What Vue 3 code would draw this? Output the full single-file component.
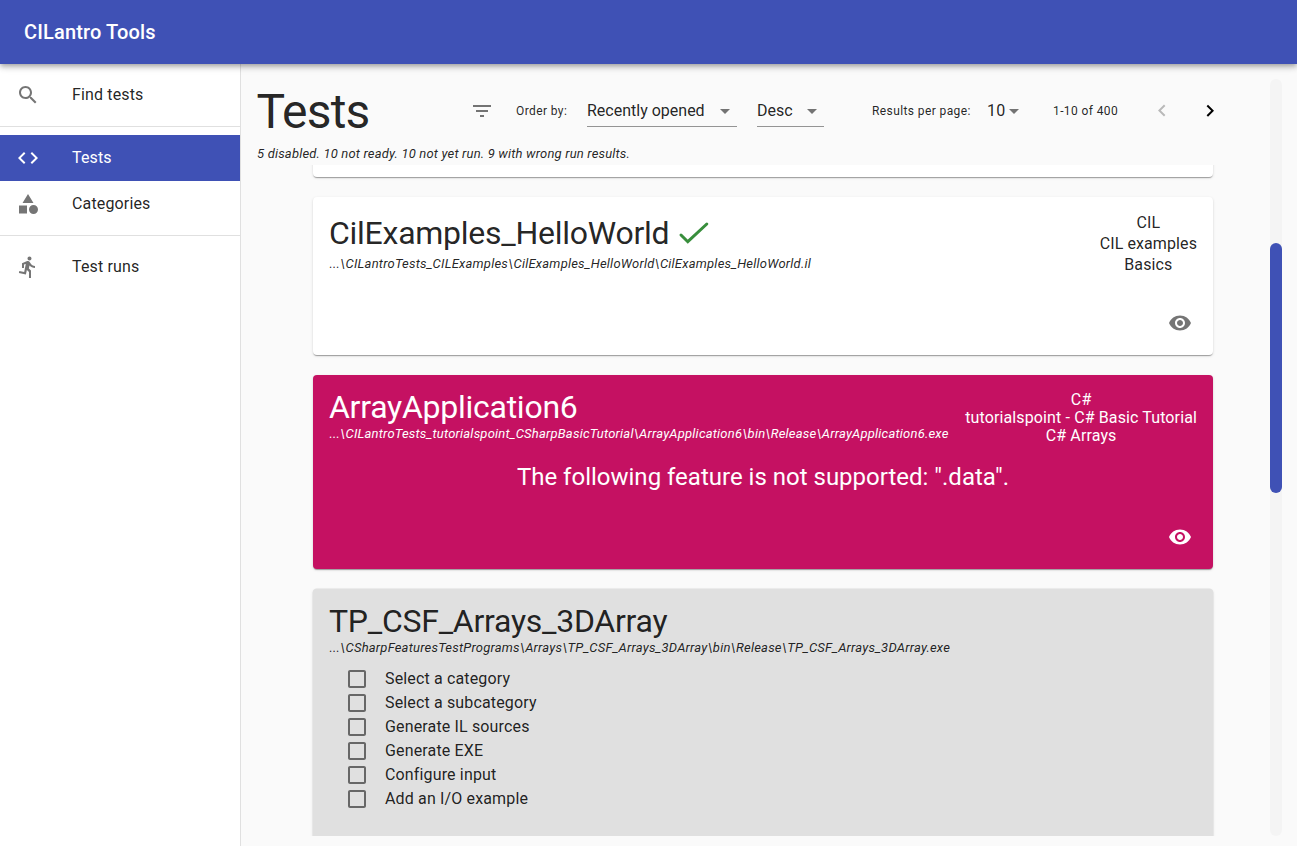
<script setup>
const nav = [
  [{ label: 'Find tests', icon: 'search' }],
  [
    { label: 'Tests', icon: 'code', active: true },
    { label: 'Categories', icon: 'category' }
  ],
  [{ label: 'Test runs', icon: 'run' }]
]
const icons = {
  search: 'M15.5 14h-.79l-.28-.27C15.41 12.59 16 11.11 16 9.5 16 5.91 13.09 3 9.5 3S3 5.91 3 9.5 5.91 16 9.5 16c1.61 0 3.09-.59 4.23-1.57l.27.28v.79l5 4.99L20.49 19l-4.99-5zm-6 0C7.01 14 5 11.99 5 9.5S7.01 5 9.5 5 14 7.01 14 9.5 11.99 14 9.5 14z',
  code: 'M9.4 16.6L4.8 12l4.6-4.6L8 6l-6 6 6 6 1.4-1.4zm5.2 0l4.6-4.6-4.6-4.6L16 6l6 6-6 6-1.4-1.4z',
  category: 'M12 2l-5.5 9h11z M17.5 13a4.5 4.5 0 1 0 0 9 4.5 4.5 0 1 0 0-9z M3 13.5h8v8H3z',
  run: 'M13.49 5.48c1.1 0 2-.9 2-2s-.9-2-2-2-2 .9-2 2 .9 2 2 2zm-3.6 13.9l1-4.4 2.1 2v6h2v-7.5l-2.1-2 .6-3c1.3 1.5 3.3 2.5 5.5 2.5v-2c-1.9 0-3.5-1-4.3-2.4l-1-1.6c-.4-.6-1-1-1.7-1-.3 0-.5.1-.8.1l-5.2 2.2v4.7h2v-3.4l1.8-.7-1.6 8.1-4.9-1-.4 2 7 1.4z',
  filter: 'M10 18h4v-2h-4v2zM3 6v2h18V6H3zm3 7h12v-2H6v2z',
  drop: 'M7 10l5 5 5-5z',
  left: 'M15.41 16.09l-4.58-4.59 4.58-4.59L14 5.5l-6 6 6 6z',
  right: 'M8.59 16.34l4.58-4.59-4.58-4.59L10 5.75l6 6-6 6z',
  eye: 'M12 4.5C7 4.5 2.73 7.61 1 12c1.73 4.39 6 7.5 11 7.5s9.27-3.11 11-7.5c-1.73-4.39-6-7.5-11-7.5zM12 17c-2.76 0-5-2.24-5-5s2.24-5 5-5 5 2.24 5 5-2.24 5-5 5zm0-8c-1.66 0-3 1.34-3 3s1.34 3 3 3 3-1.34 3-3-1.34-3-3-3z',
  box: 'M19 5v14H5V5h14m0-2H5c-1.1 0-2 .9-2 2v14c0 1.1.9 2 2 2h14c1.1 0 2-.9 2-2V5c0-1.1-.9-2-2-2z'
}
const steps = ['Select a category', 'Select a subcategory', 'Generate IL sources', 'Generate EXE', 'Configure input', 'Add an I/O example']
</script>

<template>
  <div class="app">
    <header class="bar"><h6>CILantro Tools</h6></header>
    <div class="body">
      <nav class="side">
        <ul v-for="(group, i) in nav" :key="i">
          <li v-for="item in group" :key="item.label" :class="{ active: item.active }">
            <svg class="icon" viewBox="0 0 24 24"><path :d="icons[item.icon]" /></svg>
            <span>{{ item.label }}</span>
          </li>
        </ul>
      </nav>
      <main>
        <div class="content">
          <div class="head">
            <h1>Tests</h1>
            <svg class="icon filter" viewBox="0 0 24 24"><path :d="icons.filter" /></svg>
            <span class="small order">Order by:</span>
            <div class="select wide"><span>Recently opened</span><svg class="icon" viewBox="0 0 24 24"><path :d="icons.drop" /></svg></div>
            <div class="select narrow"><span>Desc</span><svg class="icon" viewBox="0 0 24 24"><path :d="icons.drop" /></svg></div>
            <span class="small results">Results per page:</span>
            <div class="count"><span>10</span><svg class="icon" viewBox="0 0 24 24"><path :d="icons.drop" /></svg></div>
            <span class="small range">1-10 of 400</span>
            <svg class="icon prev" viewBox="0 0 24 24"><path :d="icons.left" /></svg>
            <svg class="icon next" viewBox="0 0 24 24"><path :d="icons.right" /></svg>
          </div>
          <p class="summary">5 disabled. 10 not ready. 10 not yet run. 9 with wrong run results.</p>
          <div class="list">
            <article class="card previous"></article>
            <article class="card ok">
              <div class="row">
                <div>
                  <h2>CilExamples_HelloWorld<svg class="check" viewBox="0 0 32 32"><path d="M3 18l6.8 6.7L28.8 7" /></svg></h2>
                  <p class="path">...\CILantroTests_CILExamples\CilExamples_HelloWorld\CilExamples_HelloWorld.il</p>
                </div>
                <div class="tags"><span>CIL</span><span>CIL examples</span><span>Basics</span></div>
              </div>
              <svg class="icon eye" viewBox="0 0 24 24"><path :d="icons.eye" /></svg>
            </article>
            <article class="card error">
              <div class="row">
                <div>
                  <h2>ArrayApplication6</h2>
                  <p class="path">...\CILantroTests_tutorialspoint_CSharpBasicTutorial\ArrayApplication6\bin\Release\ArrayApplication6.exe</p>
                </div>
                <div class="tags"><span>C#</span><span>tutorialspoint - C# Basic Tutorial</span><span>C# Arrays</span></div>
              </div>
              <p class="message">The following feature is not supported: ".data".</p>
              <svg class="icon eye" viewBox="0 0 24 24"><path :d="icons.eye" /></svg>
            </article>
            <article class="card pending">
              <h2>TP_CSF_Arrays_3DArray</h2>
              <p class="path">...\CSharpFeaturesTestPrograms\Arrays\TP_CSF_Arrays_3DArray\bin\Release\TP_CSF_Arrays_3DArray.exe</p>
              <ul class="steps">
                <li v-for="s in steps" :key="s"><svg class="icon" viewBox="0 0 24 24"><path :d="icons.box" /></svg><span>{{ s }}</span></li>
              </ul>
            </article>
          </div>
        </div>
        <div class="track"><div class="thumb"></div></div>
      </main>
    </div>
  </div>
</template>

<style>
html, body { background: #fafafa; overflow: hidden; }
</style>

<style scoped>
* { box-sizing: border-box; margin: 0; padding: 0; }
.app { height: 846px; display: flex; flex-direction: column; font: 400 16px/24px Roboto, "Liberation Sans", sans-serif; letter-spacing: 0.15px; color: rgba(0,0,0,.87); background: #fafafa; white-space: nowrap; }
.bar { height: 64px; flex: none; padding: 0 24px; display: flex; align-items: center; background: #3f51b5; color: #fff; position: relative; box-shadow: 0 2px 4px -1px rgba(0,0,0,.2), 0 4px 5px rgba(0,0,0,.14), 0 1px 10px rgba(0,0,0,.12); }
h6 { font-size: 20px; line-height: 32px; font-weight: 500; letter-spacing: .15px; }
.body { flex: 1; min-height: 0; display: flex; }
.side { width: 241px; flex: none; background: #fff; border-right: 1px solid #e0e0e0; }
ul { list-style: none; }
.side ul { padding: 8px 0; }
.side ul + ul { border-top: 1px solid #e0e0e0; }
.side li { height: 46px; padding: 0 16px 1px; display: flex; align-items: center; }
.side li .icon { margin: 1px 32px 0 0; }
.side li.active { background: #3f51b5; color: #fff; }
.icon { width: 24px; height: 24px; flex: none; fill: rgba(0,0,0,.54); display: block; }
.active .icon { fill: #fff; }
main { flex: 1; min-width: 0; display: flex; padding: 15px 15px 10px 16px; }
.content { width: 1013px; flex: none; display: flex; flex-direction: column; padding-top: 1px; }
.head { height: 62px; flex: none; display: flex; align-items: center; }
h1 { font-size: 48px; line-height: 56px; font-weight: 400; letter-spacing: -.8px; width: 213px; padding-top: 1px; text-indent: -.5px; }
.small { font-size: 12px; line-height: 20px; letter-spacing: .4px; }
.order { margin-left: 22px; width: 71px; }
.select { height: 32px; display: flex; align-items: center; justify-content: space-between; border-bottom: 1px solid #949494; }
.wide { width: 150px; letter-spacing: 0; }
.narrow { width: 67px; margin-left: 20px; letter-spacing: 0; }
.results { margin-left: 48px; width: 115px; }
.count { display: flex; align-items: center; width: 66px; }
.count .icon { margin-left: -3px; }
.range { width: 97px; }
.prev { fill: rgba(0,0,0,.26); }
.next { fill: #000; margin-left: 24px; }
.summary { font-size: 13px; line-height: 22px; height: 23px; padding-top: 1px; font-style: italic; letter-spacing: .18px; }
.list { flex: 1; min-height: 0; overflow: hidden; display: flex; flex-direction: column; gap: 20px; padding: 0 56px; margin-right: 1px; }
.card { flex: none; width: 900px; padding: 16px; background: #fff; border-radius: 4px; display: flex; flex-direction: column; box-shadow: 0 2px 1px -1px rgba(0,0,0,.2), 0 1px 1px rgba(0,0,0,.14), 0 1px 3px rgba(0,0,0,.12); }
.previous { height: 32px; margin-top: -20px; }
.ok { height: 158px; }
.error { height: 194px; background: #c51162; color: #fff; }
.pending { height: 300px; background: #e0e0e0; box-shadow: 0 0 0 .5px #e0e0e0, 0 1px 3px rgba(0,0,0,.12); }
.row { display: flex; justify-content: space-between; }
h2 { font-size: 32px; line-height: 40px; font-weight: 400; letter-spacing: -.26px; display: flex; align-items: center; }
.error h2, .pending h2 { line-height: 32px; }
.path { font-size: 13px; line-height: 21px; font-style: italic; letter-spacing: .213px; text-indent: .5px; }
.pending .path, .error .path { line-height: 20px; padding-top: 1px; }
.error .path { letter-spacing: .205px; }
.check { width: 32px; height: 32px; margin-left: 8.5px; fill: none; stroke: #388e3c; stroke-width: 3; stroke-linecap: round; }
.tags { display: flex; flex-direction: column; text-align: center; line-height: 21px; margin-top: -1px; letter-spacing: .1px; }
.error .tags { line-height: 18px; margin-top: 0; letter-spacing: .12px; }
.eye { margin: auto 5px 4px auto; }
.error .eye { fill: #fff; }
.message { font-size: 24px; line-height: 32px; font-weight: 400; text-align: center; margin-top: 16px; letter-spacing: 0; }
.steps { margin: 9px 0 0 16px; }
.steps li { display: flex; align-items: center; height: 24px; }
.steps .icon { margin-right: 16px; }
.track { width: 12px; margin-left: auto; border-radius: 6px; background: #f4f4f4; }
.thumb { height: 250px; margin-top: 164px; border-radius: 6px; background: #3f51b5; }
</style>
